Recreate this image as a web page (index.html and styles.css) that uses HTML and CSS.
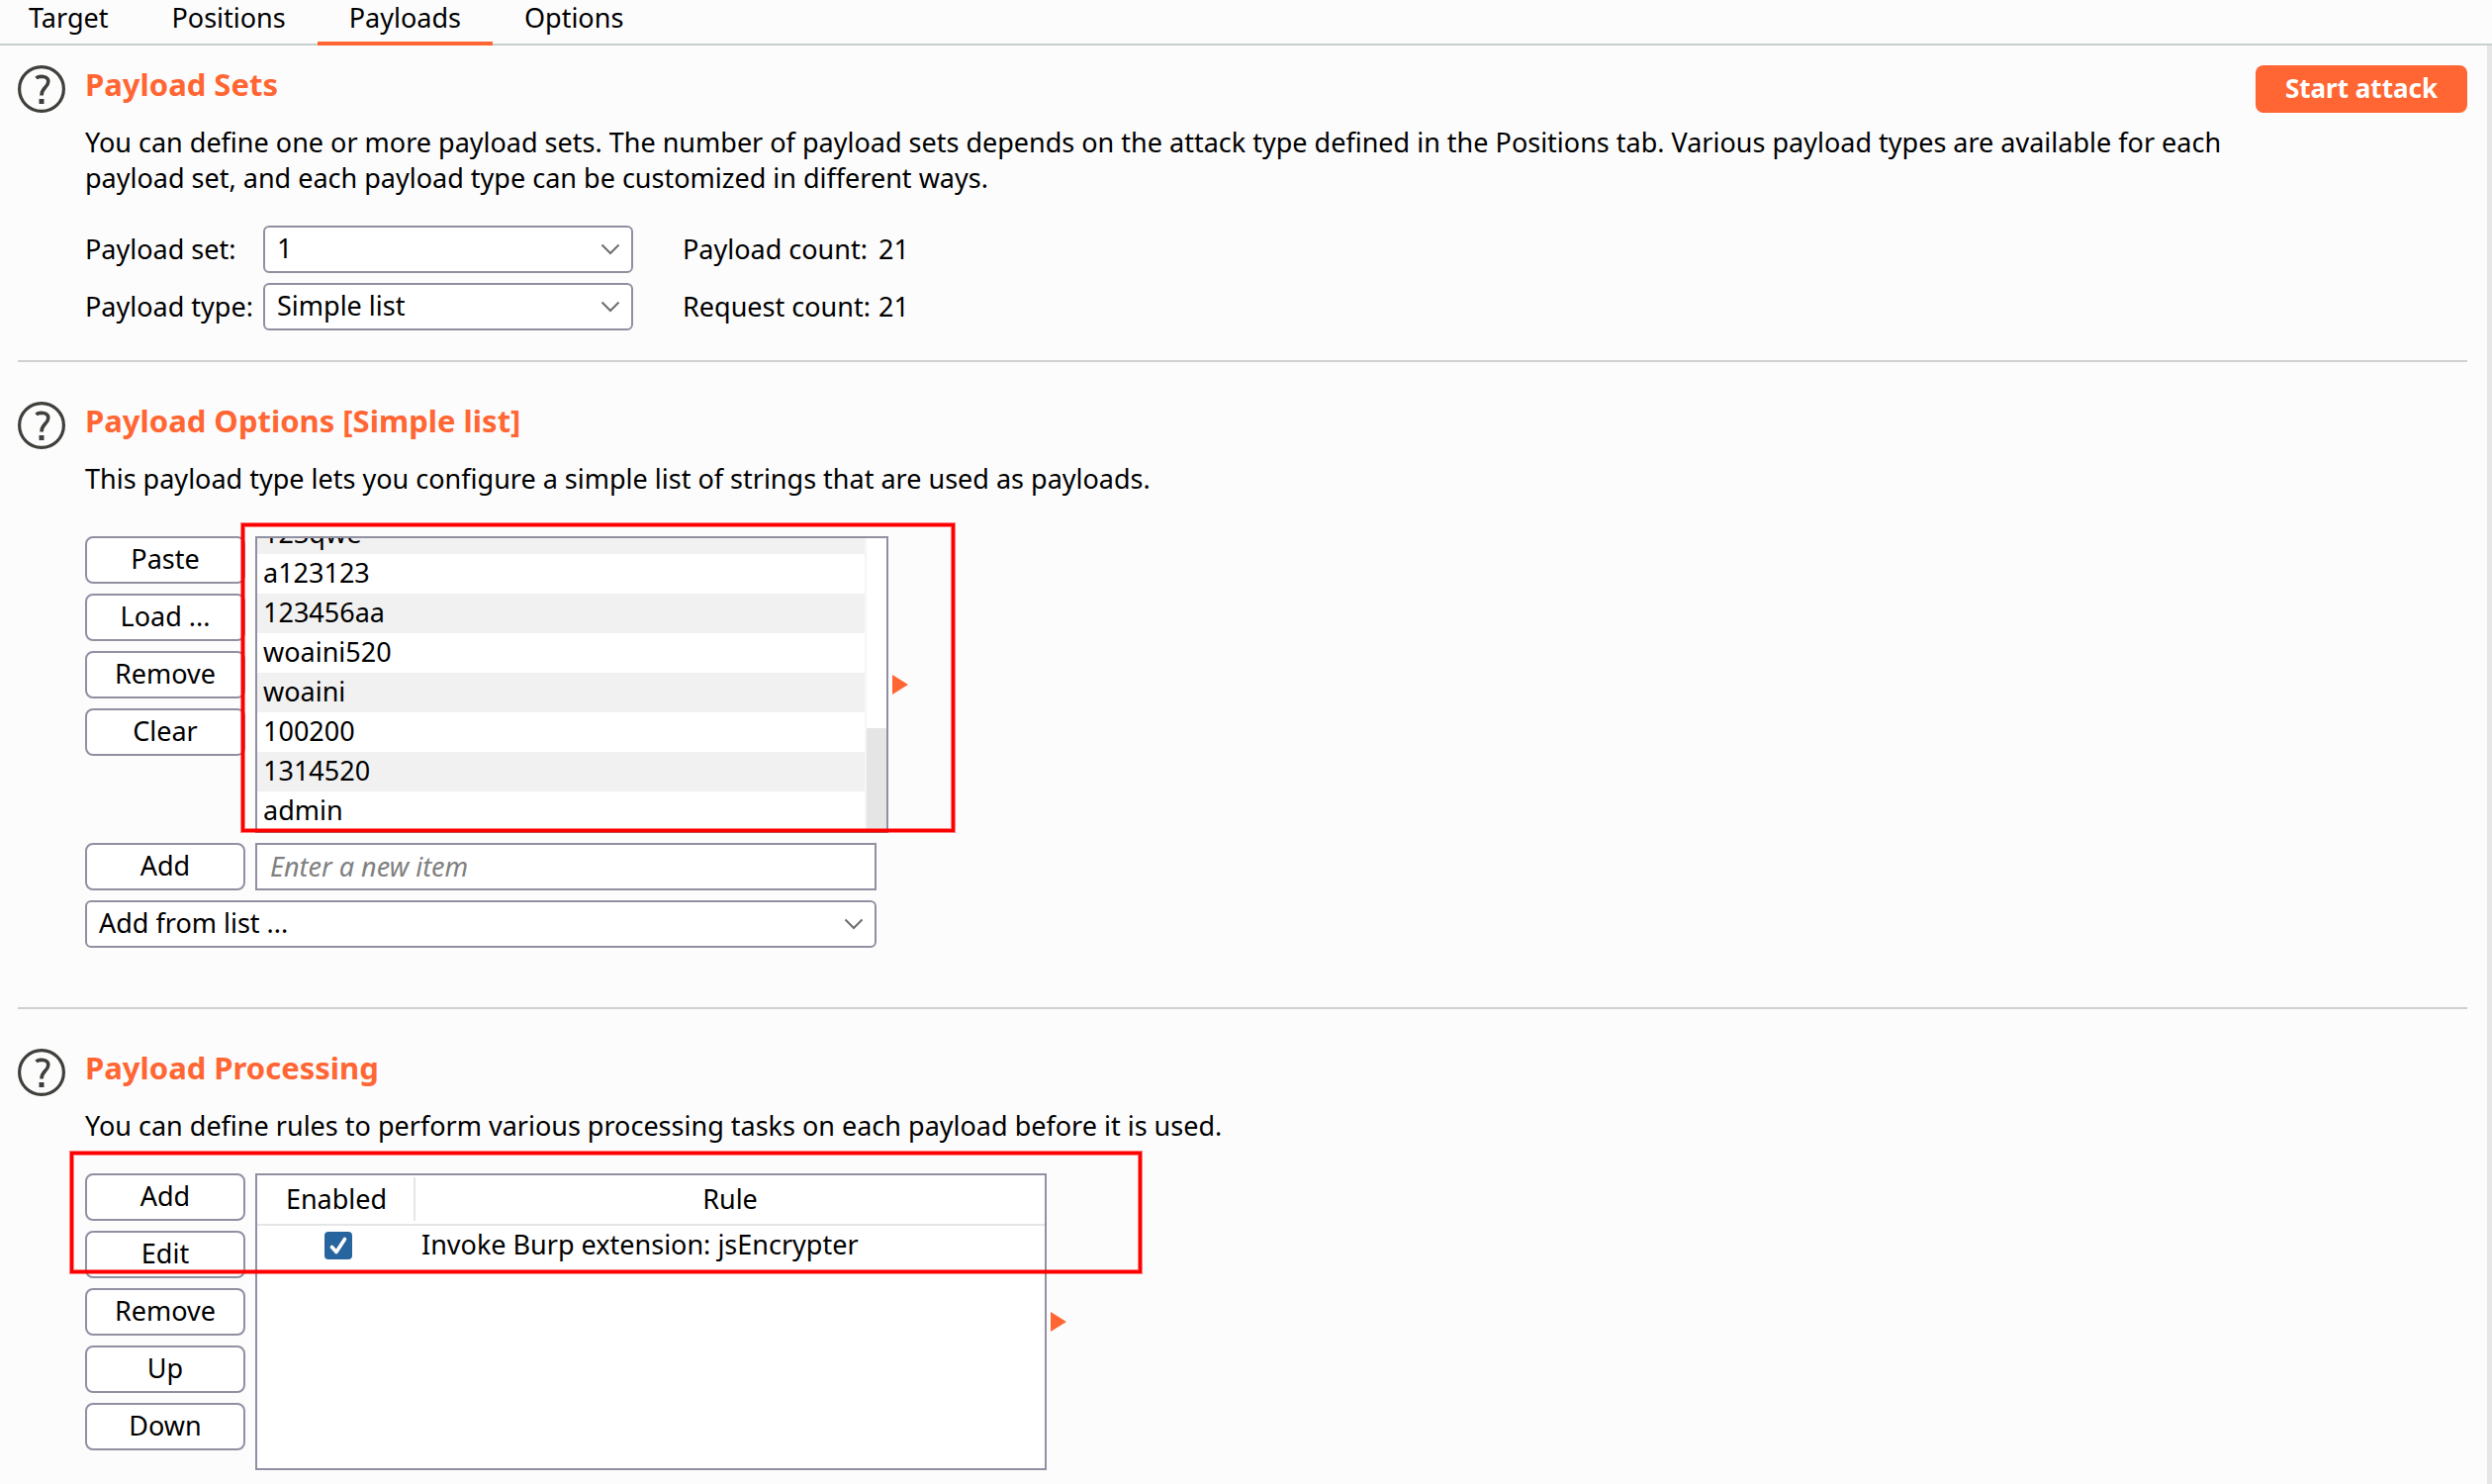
FILE: index.html
```html
<!DOCTYPE html>
<html lang="en">
<head>
    <meta charset="UTF-8">
    <meta name="viewport" content="width=device-width, initial-scale=1.0">
    <title>Intruder - Payloads</title>
    <link rel="stylesheet" href="styles.css">
</head>
<body>
    <!-- Shared icons -->
    <svg class="sprite" aria-hidden="true">
        <symbol id="icon-help" viewBox="0 0 48 48">
            <circle cx="24" cy="24" r="22.4" fill="none" stroke="#3f3f3b" stroke-width="3.2"/>
            <path d="M18.500 13C21 10.800 31 10 30.800 16.500C30.600 22.500 24 22.500 24 30.500" fill="none" stroke="#3f3f3b" stroke-width="3.600"/>
            <rect x="21.500" y="34" width="5" height="5" fill="#3f3f3b"/>
        </symbol>
        <symbol id="icon-chevron" viewBox="0 0 20 12">
            <path d="M1.500 1.500L10 10L18.500 1.500" fill="none" stroke="#6e6e6e" stroke-width="2"/>
        </symbol>
    </svg>

    <nav class="tabs">
        <a href="#target">Target</a>
        <a href="#positions">Positions</a>
        <a href="#payloads" class="active">Payloads</a>
        <a href="#options">Options</a>
    </nav>

    <main>
        <!-- Payload Sets -->
        <section>
            <svg class="help"><use href="#icon-help"/></svg>
            <div class="content">
                <h2>Payload Sets</h2>
                <p>You can define one or more payload sets. The number of payload sets depends on the attack type defined in the Positions tab. Various payload types are available for each payload set, and each payload type can be customized in different ways.</p>
                <div class="sets">
                    <label for="payload-set">Payload set:</label>
                    <div class="select">
                        <select id="payload-set"><option>1</option></select>
                        <svg><use href="#icon-chevron"/></svg>
                    </div>
                    <span class="count">Payload count:</span>
                    <span>21</span>
                    <label for="payload-type">Payload type:</label>
                    <div class="select">
                        <select id="payload-type"><option>Simple list</option></select>
                        <svg><use href="#icon-chevron"/></svg>
                    </div>
                    <span class="count">Request count:</span>
                    <span>21</span>
                </div>
            </div>
            <button class="start">Start attack</button>
        </section>

        <!-- Payload Options -->
        <section class="options">
            <svg class="help"><use href="#icon-help"/></svg>
            <div class="content">
                <h2>Payload Options [Simple list]</h2>
                <p>This payload type lets you configure a simple list of strings that are used as payloads.</p>
                <div class="panel">
                    <div class="buttons">
                        <button>Paste</button>
                        <button>Load ...</button>
                        <button>Remove</button>
                        <button>Clear</button>
                    </div>
                    <div class="list-wrap">
                        <div class="list">
                            <ul>
                                <li>123qwe</li>
                                <li>a123123</li>
                                <li>123456aa</li>
                                <li>woaini520</li>
                                <li>woaini</li>
                                <li>100200</li>
                                <li>1314520</li>
                                <li>admin</li>
                            </ul>
                            <div class="scrollbar"><div class="thumb"></div></div>
                        </div>
                        <div class="mark mark-list"></div>
                    </div>
                    <svg class="arrow" viewBox="0 0 16 20"><path d="M0 0L16 10L0 20Z" fill="#ff6633"/></svg>
                </div>
                <div class="add-form">
                    <button>Add</button>
                    <input type="text" placeholder="Enter a new item" aria-label="New item">
                    <div class="select wide">
                        <select aria-label="Add from list"><option>Add from list ...</option></select>
                        <svg><use href="#icon-chevron"/></svg>
                    </div>
                </div>
            </div>
        </section>

        <!-- Payload Processing -->
        <section>
            <svg class="help"><use href="#icon-help"/></svg>
            <div class="content">
                <h2>Payload Processing</h2>
                <p>You can define rules to perform various processing tasks on each payload before it is used.</p>
                <div class="panel">
                    <div class="buttons">
                        <button>Add</button>
                        <button>Edit</button>
                        <button>Remove</button>
                        <button>Up</button>
                        <button>Down</button>
                    </div>
                    <div class="rules">
                        <table>
                            <thead>
                                <tr><th class="enabled">Enabled</th><th>Rule</th></tr>
                            </thead>
                            <tbody>
                                <tr>
                                    <td class="enabled">
                                        <label class="check">
                                            <input type="checkbox" checked aria-label="Enabled">
                                            <svg viewBox="0 0 28 28"><path d="M7.500 15.500L12 20.500L20.500 7.500" fill="none" stroke="#fff" stroke-width="3.600" stroke-linecap="round" stroke-linejoin="round"/></svg>
                                        </label>
                                    </td>
                                    <td>Invoke Burp extension: jsEncrypter</td>
                                </tr>
                            </tbody>
                        </table>
                    </div>
                    <svg class="arrow" viewBox="0 0 16 20"><path d="M0 0L16 10L0 20Z" fill="#ff6633"/></svg>
                    <div class="mark mark-rules"></div>
                </div>
            </div>
        </section>
    </main>
</body>
</html>
```
FILE: styles.css
```css
/* General Styles */
* {
    box-sizing: border-box;
}

body {
    margin: 0;
    min-height: 100vh;
    display: flex;
    flex-direction: column;
    background-color: #fcfcfc;
    color: #000;
    font-family: "Noto Sans", "Open Sans", sans-serif;
    font-size: 27px;
    line-height: 36px;
}

button, input, select {
    font: inherit;
    color: inherit;
}

.sprite {
    position: absolute;
    width: 0;
    height: 0;
}

/* Tabs */
.tabs {
    display: flex;
    height: 46px;
    border-bottom: 2px solid #c8cfcf;
}

.tabs a {
    height: 46px;
    padding: 0 32px;
    border-bottom: 4px solid transparent;
    color: #000;
    text-decoration: none;
}

.tabs a:first-child {
    padding-left: 29px;
}

.tabs a.active {
    border-bottom-color: #ff6633;
}

/* Sections */
main {
    flex: 1;
    padding: 0 20px 0 18px;
    border-right: 5px solid #e6e6e6;
}

section {
    display: flex;
    align-items: flex-start;
    padding: 20px 0 30px;
}

section + section {
    border-top: 2px solid #d0d0d0;
    padding: 40px 0 60px;
}

section:last-child {
    padding-bottom: 14px;
}

.help {
    flex: none;
    width: 48px;
    height: 48px;
    margin-right: 20px;
}

.content {
    flex: 1;
}

h2 {
    margin: 0 0 22px;
    color: #ff6633;
    font-size: 31px;
    line-height: 38px;
}

p {
    margin: 0;
}

button {
    width: 162px;
    height: 48px;
    padding: 0 0 2px;
    border: 2px solid #918fa2;
    border-radius: 8px;
    background-color: #fff;
}

.start {
    width: 214px;
    margin-left: 24px;
    border: none;
    background-color: #ff6633;
    color: #fff;
    font-size: 26px;
    font-weight: bold;
}

/* Drop-downs */
.select {
    position: relative;
}

.select select {
    appearance: none;
    display: block;
    width: 100%;
    height: 48px;
    padding: 0 40px 2px 12px;
    border: 2px solid #918fa2;
    border-radius: 6px;
    background-color: #fff;
}

.select svg {
    position: absolute;
    right: 13px;
    top: 18px;
    width: 20px;
    height: 12px;
    pointer-events: none;
}

.sets {
    display: grid;
    grid-template-columns: 180px 374px 248px auto;
    justify-content: start;
    align-items: center;
    row-gap: 10px;
    margin-top: 30px;
}

.count {
    padding-left: 50px;
}

/* Panels with a button column */
.panel {
    position: relative;
    display: flex;
    align-items: flex-start;
    gap: 10px;
    margin-top: 40px;
}

section:last-child .panel {
    margin-top: 30px;
}

.buttons {
    display: flex;
    flex-direction: column;
    gap: 10px;
}

.arrow {
    width: 16px;
    height: 20px;
    margin-left: -6px;
    align-self: center;
}

/* Payload list */
.list-wrap {
    position: relative;
    width: 640px;
}

.list {
    display: flex;
    height: 300px;
    border: 2px solid #918fa2;
    background-color: #fff;
    overflow: hidden;
}

.list ul {
    flex: 1;
    display: flex;
    flex-direction: column;
    justify-content: flex-end;
    margin: 0;
    padding: 0;
    list-style: none;
}

.list li {
    flex: none;
    height: 40px;
    padding-left: 6px;
    line-height: 38px;
}

.list li:nth-child(odd) {
    background-color: #f1f1f1;
}

.scrollbar {
    display: flex;
    flex-direction: column;
    justify-content: flex-end;
    width: 22px;
    border-left: 2px solid #f6f6f6;
}

.thumb {
    height: 35%;
    background-color: #e5e5e5;
}

.add-form {
    display: grid;
    grid-template-columns: 162px 628px;
    gap: 10px;
    margin-top: 10px;
}

.add-form input {
    height: 48px;
    padding: 0 13px 2px;
    border: 2px solid #918fa2;
    background-color: #fff;
}

.add-form input::placeholder {
    color: #808080;
    font-style: italic;
    opacity: 1;
}

.wide {
    grid-column: span 2;
}

/* Rules table */
.rules {
    width: 800px;
    height: 300px;
    border: 2px solid #918fa2;
    background-color: #fff;
}

table {
    width: 100%;
    border-collapse: collapse;
}

th {
    height: 50px;
    padding: 0 0 2px;
    border-bottom: 2px solid #e5e5e5;
    font-weight: normal;
}

td {
    height: 40px;
    padding: 0 0 2px 6px;
}

.enabled {
    width: 160px;
    text-align: center;
}

td.enabled {
    padding: 0 0 0 4px;
}

th.enabled {
    background: linear-gradient(#e5e5e5, #e5e5e5) right 2px / 2px 44px no-repeat;
}

.check {
    position: relative;
    display: block;
    width: 28px;
    height: 28px;
    margin: 0 auto;
}

.check input {
    appearance: none;
    display: block;
    width: 28px;
    height: 28px;
    margin: 0;
    border-radius: 4px;
    background-color: #26659e;
}

.check svg {
    position: absolute;
    inset: 0;
}

/* Red highlight frames */
.mark {
    position: absolute;
    border: 3px solid #ff0000;
    box-shadow: 0 0 0 1px rgba(255, 0, 0, 0.5), inset 0 0 0 1px rgba(255, 0, 0, 0.5);
    pointer-events: none;
}

.mark-list {
    top: -13px;
    left: -14px;
    width: 721px;
    height: 312px;
}

.mark-rules {
    top: -22px;
    left: -15px;
    width: 1083px;
    height: 123px;
}
```
